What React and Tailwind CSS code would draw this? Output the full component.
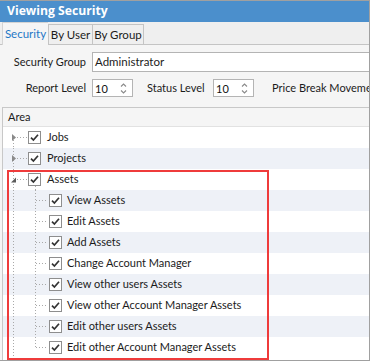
import React from "react";

const FONT = { fontFamily: 'Lato, "Open Sans", sans-serif' };
const TITLE_FONT = { fontFamily: '"Open Sans", "Noto Sans", sans-serif' };

function Check() {
  return (
    <div className="w-[13px] h-[13px] border border-[#8e8e8e] bg-white flex items-center justify-center shrink-0">
      <svg width="11" height="11" viewBox="0 0 11 11">
        <path d="M2 5.6 L4.4 8 L9 2.8" fill="none" stroke="#333" strokeWidth="1.7" />
      </svg>
    </div>
  );
}

function Spinner() {
  return (
    <div className="w-[41px] h-[18px] border border-[#b4b4b4] bg-white flex items-center pl-[2px] pr-[5px] justify-between">
      <span className="text-[11px] leading-none text-[#111]">10</span>
      <svg width="7" height="13" viewBox="0 0 7 13">
        <path d="M1 4.5 L3.5 2 L6 4.5" fill="none" stroke="#8a8a8a" strokeWidth="1.1" />
        <path d="M1 8.5 L3.5 11 L6 8.5" fill="none" stroke="#8a8a8a" strokeWidth="1.1" />
      </svg>
    </div>
  );
}

const rows = [
  { label: "Jobs", level: 0, state: "collapsed" },
  { label: "Projects", level: 0, state: "collapsed" },
  { label: "Assets", level: 0, state: "expanded" },
  { label: "View Assets", level: 1 },
  { label: "Edit Assets", level: 1 },
  { label: "Add Assets", level: 1 },
  { label: "Change Account Manager", level: 1 },
  { label: "View other users Assets", level: 1 },
  { label: "View other Account Manager Assets", level: 1 },
  { label: "Edit other users Assets", level: 1 },
  { label: "Edit other Account Manager Assets", level: 1, last: true },
];

function TreeLines({ row, index }) {
  const dot = { stroke: "#a9a9a9", strokeWidth: 1, strokeDasharray: "1 2" };
  return (
    <svg className="absolute left-0 top-0" width="50" height="21" viewBox="0 0 50 21">
      <line x1="10.5" y1={index === 0 ? 10 : 0} x2="10.5" y2="21" {...dot} />
      {row.level === 0 && <line x1="14" y1="10.5" x2="24" y2="10.5" {...dot} />}
      {row.level === 0 && row.state === "expanded" && (
        <line x1="32.5" y1="17" x2="32.5" y2="21" {...dot} />
      )}
      {row.level === 1 && (
        <>
          <line x1="32.5" y1="0" x2="32.5" y2={row.last ? 10.5 : 21} {...dot} />
          <line x1="33" y1="10.5" x2="44" y2="10.5" {...dot} />
        </>
      )}
      {row.state === "collapsed" && <path d="M9 7 L9 14 L13 10.5 Z" fill="#8a8a8a" />}
      {row.state === "expanded" && <path d="M13 8.5 L13 13.5 L8 13.5 Z" fill="#5a5a5a" />}
    </svg>
  );
}

export default function App() {
  return (
    <div
      className="w-[370px] h-[361px] overflow-hidden bg-[#f5f5f5] border-t border-r border-b border-[#a0a0a0] flex flex-col text-[#1b1b1b] whitespace-nowrap"
      style={FONT}
    >
      {/* Title bar */}
      <div
        className="h-[21px] shrink-0 bg-[#4b8fcc] text-white font-bold text-[12.2px] pl-[7px] flex items-center"
        style={TITLE_FONT}
      >
        Viewing Security
      </div>

      {/* Tabs */}
      <div className="h-[23px] shrink-0 bg-[#efefef] border-b border-[#c4c4c4] flex items-end pl-[2px] text-[11.5px]">
        <div className="w-[46px] h-[23px] -mb-px bg-[#f5f5f5] border-l border-t border-[#d4d4d4] flex items-center justify-center text-[#1f78c6]">
          Security
        </div>
        <div className="w-[45px] h-[20px] border border-b-0 border-[#c4c4c4] flex items-center justify-center">
          By User
        </div>
        <div className="w-[51px] h-[20px] border border-b-0 border-l-0 border-[#c4c4c4] flex items-center justify-center">
          By Group
        </div>
      </div>

      {/* Form */}
      <div className="shrink-0 flex flex-col text-[11px] pt-[7px]">
        <div className="flex items-center h-[20px]">
          <div className="w-[86px] shrink-0 text-right">Security Group</div>
          <div className="ml-[6px] w-[300px] h-[20px] bg-white border border-[#b4b4b4] flex items-center pl-[2px] shrink-0 text-[11.5px]">
            Administrator
          </div>
        </div>
        <div className="flex items-center h-[18px] mt-[7px]">
          <div className="w-[86px] text-right shrink-0">Report Level</div>
          <div className="ml-[6px] shrink-0"><Spinner /></div>
          <div className="ml-[14px] w-[60px] shrink-0">Status Level</div>
          <div className="ml-[6px] shrink-0"><Spinner /></div>
          <div className="ml-[18px] shrink-0">Price Break Movement</div>
        </div>
      </div>

      {/* Grid */}
      <div className="mt-[10px] ml-[2px] flex-1 border-t border-l border-[#c8c8c8] flex flex-col relative">
        <div className="h-[19px] shrink-0 border-b border-[#e2e2e2] flex items-center pl-[5px] bg-[#f5f5f5] text-[11px]">
          Area
        </div>
        <div className="flex flex-col bg-white flex-1">
          {rows.map((row, i) => (
            <div
              key={row.label}
              className={`relative h-[21px] shrink-0 flex items-center ${i % 2 === 1 ? "bg-[#eef1f7]" : "bg-white"} ${row.level === 0 ? "pl-[25px]" : "pl-[46px]"}`}
            >
              <TreeLines row={row} index={i} />
              <Check />
              <span className={`text-[11px] ${row.level === 0 ? "ml-[6px]" : "ml-[5px]"}`}>{row.label}</span>
            </div>
          ))}
        </div>
        <div className="absolute left-[4px] top-[62px] w-[262px] h-[190px] border-2 border-[#ef3b3b] pointer-events-none" />
      </div>
    </div>
  );
}
